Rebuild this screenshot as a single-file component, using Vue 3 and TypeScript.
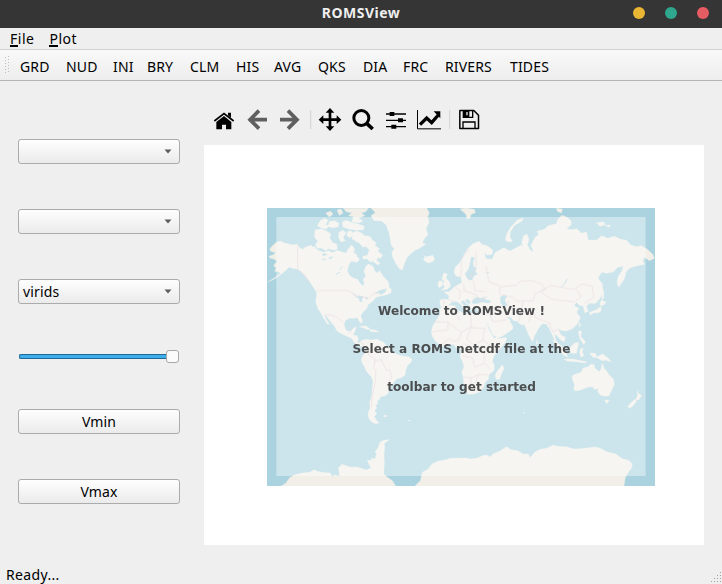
<script setup lang="ts">
interface Action { label: string; width: number }

const actions: Action[] = [
  { label: 'GRD', width: 46 },
  { label: 'NUD', width: 47 },
  { label: 'INI', width: 34 },
  { label: 'BRY', width: 43 },
  { label: 'CLM', width: 46 },
  { label: 'HIS', width: 38 },
  { label: 'AVG', width: 44 },
  { label: 'QKS', width: 45 },
  { label: 'DIA', width: 40 },
  { label: 'FRC', width: 42 },
  { label: 'RIVERS', width: 65 },
  { label: 'TIDES', width: 56 },
]
const selects: string[] = ['', '', 'virids']
const buttons: string[] = ['Vmin', 'Vmax']
</script>

<template>
  <div class="window">
    <header class="titlebar">
      <span class="title">ROMSView</span>
      <div class="controls"><i class="dot min" /><i class="dot max" /><i class="dot close" /></div>
    </header>
    <nav class="menubar">
      <span class="menu"><span class="key">F</span>ile</span>
      <span class="menu"><span class="key">P</span>lot</span>
    </nav>
    <div class="toolbar">
      <svg class="grip" width="5" height="18" viewBox="0 0 5 18">
        <path d="M.5 1v17M3.5 0v18" stroke="#bdbdbd" stroke-dasharray="1 2" fill="none" />
      </svg>
      <span v-for="a in actions" :key="a.label" class="action" :style="{ width: a.width + 'px' }">{{ a.label }}</span>
    </div>
    <main class="body">
      <aside class="side">
        <div v-for="(s, i) in selects" :key="i" class="field select">
          <span>{{ s }}</span>
          <svg width="8" height="5" viewBox="0 0 8 5"><path d="M.5 .5h7L4 4.500z" fill="#5c5c5c" /></svg>
        </div>
        <div class="slider"><div class="track" /><div class="thumb" /></div>
        <div v-for="b in buttons" :key="b" class="field button">{{ b }}</div>
      </aside>
      <section class="plot">
        <svg class="icons" width="290" height="50" viewBox="0 0 870 150">
          <g fill="none" stroke="#000">
            <path d="M43 69L72 47l29 22" stroke-width="5" />
            <path d="M49 72L72 54l22 18v22H78V80H66v14H49z" fill="#000" stroke="none" />
            <path d="M84 44h9v16l-9-8z" fill="#000" stroke="none" />
            <g stroke="#5f5f5f" stroke-width="11">
              <path d="M150 65h51M177 38l-27 27 27 27" />
              <path d="M240 65h51M264 38l27 27-27 27" />
            </g>
            <path d="M332 36v57M749 36v57" stroke="#d4d4d4" stroke-width="3" />
            <path d="M362 65h56M390 36v57" stroke-width="8" />
            <path d="M390 30l13 14h-26zM390 99l13-14h-26zM356 65l14-13v26zM424 65l-14-13v26z" fill="#000" stroke="none" />
            <circle cx="484" cy="60" r="22.5" stroke-width="9" />
            <path d="M500 76l18 17" stroke-width="11" />
            <path d="M558 48h60M558 67h60M558 86h60" stroke-width="4" />
            <path d="M569 42h14v12h-14zM594 61h15v12h-15zM574 80h15v12h-15z" fill="#000" stroke="none" />
            <path d="M652.500 36v56.500H723" stroke-width="3" />
            <path d="M660 80l20-20 15 14 20-23" stroke-width="10" />
            <path d="M701 40h20v21z" fill="#000" stroke="none" />
            <path d="M779.500 37.500h42l14 14v40h-56z" stroke-width="4.500" stroke-linejoin="round" />
            <path d="M790 38v20h28V38M789 91V72h36v19" stroke-width="4" />
            <path d="M790 38h18v20h-18z" fill="#000" stroke="none" />
            <path d="M801 42v10" stroke="#eee" stroke-width="4" />
          </g>
        </svg>
        <div class="canvas">
          <svg class="map" width="388" height="278" viewBox="21 24 1164 834">
            <rect x="21" y="24" width="1164" height="834" fill="#aad3df" />
            <g fill="#f1efe8" stroke="#f1efe8" stroke-width="1" stroke-linejoin="round">
              <path d="M36 139L49 127 62 123 72 129 80 130 97 135 112 133 119 143 128 148 138 140 153 136 160 142 165 139 171 149 190 157 205 153 219 158 231 151 245 156 259 159 264 148 275 135 284 147 281 158 292 166 283 175 273 185 266 196 262 213 270 228 282 235 293 238 300 250 310 259 313 249 309 240 317 228 312 214 317 200 325 192 339 199 344 213 351 219 359 212 369 228 376 236 384 244 388 259 374 266 358 271 344 280 357 279 362 285 374 278 381 269 395 277 381 284 366 287 349 291 338 304 323 315 321 325 307 339 302 347 308 364 304 370 298 365 293 353 281 355 268 355 257 361 252 371 255 385 261 393 273 393 280 384 289 382 284 396 278 404 291 407 295 417 292 426 303 433 316 434 313 438 300 439 285 430 275 415 264 410 246 402 231 393 225 381 213 366 198 347 191 342 200 360 208 373 202 372 192 356 182 338 174 326 167 307 169 289 170 277 159 260 145 240 131 224 123 214 110 207 97 205 88 201 78 211 67 220 52 231 39 239 24 246 46 232 62 219 55 215 44 214 48 205 41 196 51 184 42 177 31 175 27 169 40 164 46 158 32 154 29 148z" />
              <path d="M333 24H500L508 39 503 50 507 67 498 87 504 103 493 116 487 128 497 133 480 144 465 151 447 166 440 174 433 191 427 210 418 206 407 190 399 173 395 157 403 147 394 136 391 119 388 101 379 75 364 63 342 62 333 47 346 38z" />
              <path d="M490 178L495 171 491 166 500 171 509 168 518 166 524 177 518 185 505 189 496 184z" />
              <path d="M165 90L184 87 198 92 213 102 209 114 218 128 230 133 232 146 223 151 205 146 198 152 184 144 173 145 166 134 174 123 164 113zM172 77L180 63 193 55 204 61 197 74 209 77 198 87 184 84zM207 65L224 62 237 70 235 80 216 84 205 78zM247 66L259 61 276 68 294 72 313 79 310 89 289 91 267 87 249 81zM197 39L212 34 219 43 208 51zM231 30L243 27 249 39 238 46zM250 25H325L317 35 304 39 314 47 296 54 309 64 295 69 276 65 280 50 266 47 275 38 259 35zM237 97L249 91 258 99 249 113 256 122 243 126 236 112zM262 95L273 92 280 105 269 113 260 106zM277 98L291 93 304 99 315 107 329 109 338 121 349 128 344 136 358 146 353 154 368 165 361 176 354 171 350 181 360 190 355 195 338 184 330 186 323 177 307 176 310 168 322 166 328 149 317 139 309 142 299 130 288 124 276 116zM273 167L286 166 299 177 291 187 277 184 269 177z" />
              <path d="M298 380L316 377 330 386 324 389 309 383zM329 389L345 390 356 395 344 396 331 394zM384 258L395 269 391 276 377 269z" />
              <g transform="translate(240 180)">
                <path d="M58 249L66 241 79 238 93 240 110 238 131 247 140 257 152 266 154 276 166 281 185 287 207 291 216 298 213 307 202 317 197 330 195 345 184 353 169 357 160 370 151 382 144 390 145 400 135 407 121 410 118 419 111 423 114 430 107 436 110 444 104 452 110 461 103 470 108 479 117 489 105 491 93 484 85 472 84 459 90 444 89 427 95 408 97 384 99 362 93 349 80 335 73 319 66 309 64 298 68 286 78 276 78 262 71 255z" />
                <path d="M301 144L314 143 332 136 347 138 349 149 365 157 379 163 383 157 398 160 410 165 427 164 436 170 439 183 448 196 454 214 464 226 472 236 500 233 497 246 487 258 472 275 462 288 457 302 463 316 462 331 447 344 445 358 435 367 431 382 420 395 401 402 384 403 380 389 371 369 370 352 365 337 372 321 368 305 360 290 364 272 358 263 347 262 342 254 323 253 307 258 297 253 286 243 277 229 274 216 278 198 289 181 300 163z" />
                <path d="M487 314L492 325 484 343 479 357 470 359 465 348 472 333zM302 139L299 121 307 117 326 119 327 107 312 96 328 95 344 80 358 72 366 69 363 52 374 48 379 62 393 67 408 60 418 48 415 33 437 20 460 0 520 0 540 130 460 150 440 149 429 154 411 151 408 140 400 142 405 151 397 155 389 139 376 126 367 120 372 131 388 142 379 149 371 145 361 131 348 124 335 126 328 133 322 145 309 146z" />
                <path d="M311 39L322 42 318 54 328 65 332 79 322 87 304 91 314 81 308 70 314 65 306 57zM297 63L307 63 307 77 298 83 293 74z" />
              </g>
              <g transform="translate(600 0)">
                <path d="M3 230L-12 228-18 216-14 202 0 187 12 164 24 145 39 131 58 124 65 133 83 138 99 151 96 163 82 166 72 158 78 176 96 178 105 158 117 151 132 143 150 153 167 144 184 135 190 143 185 128 190 108 201 102 207 119 202 134 211 151 221 157 213 136 220 122 226 110 236 105 231 94 253 88 265 77 289 71 294 57 306 46 321 52 334 64 333 75 319 86 335 89 350 86 364 99 380 97 385 121 410 120 425 107 444 115 464 109 482 118 500 121 511 134 529 140 544 137 562 148 578 163 583 175 569 182 553 172 548 184 554 193 531 197 510 204 498 215 494 235 485 249 476 262 471 250 474 230 486 212 490 198 473 202 460 216 439 220 425 216 414 234 427 252 428 275 421 293 407 310 388 310 379 319 385 334 374 338 370 319 357 315 349 307 342 317 357 325 350 336 361 353 352 372 336 387 318 393 303 391 295 385 302 404 316 412 313 425 302 420 293 409 284 401 286 417 297 439 288 431 276 402 268 386 259 372 246 371 232 391 223 408 218 425 207 407 199 388 194 375 181 373 169 362 148 363 157 375 159 386 143 398 126 409 110 415 98 398 89 384 78 362 67 347 45 341 70 331 65 319 40 320 33 300z" />
                <path d="M136 121L141 100 154 79 173 60 189 54 186 63 164 76 151 95 150 113 158 124 146 126zM0 27L17 24 43 28 46 38 33 43 31 53 22 58 17 42zM289 25L307 27 304 39 292 34zM410 68L432 66 435 74 420 79zM435 76L452 75 447 82z" />
                <path d="M424 260L431 273 431 295 426 299zM424 300L439 307 428 317 419 314zM422 318L424 331 416 338 399 339 390 346 389 337 406 331 417 324zM355 393L364 393 363 410 376 425 372 434 360 417zM358 366L362 375 357 381zM230 421L235 430 230 434z" />
              </g>
              <g transform="translate(600 435)">
                <path d="M278 -14L294 5 310 29 323 36 317 22 304 3 286 -12zM312 42L337 42 363 47 380 50 375 54 348 50 321 48zM328 10L343-5 356-8 353 8 349 25 334 25zM361 12L370 9 366 21 372 31 363 36 359 24zM389 24L406 25 411 36 427 27 443 38 454 50 437 46 427 47 411 38 398 36z" />
                <path d="M336 93L345 88 363 82 370 69 385 65 393 57 404 60 403 68 418 80 423 73 427 55 432 70 440 78 448 91 460 102 463 119 455 136 447 152 434 154 421 150 413 139 414 128 405 134 397 125 382 127 365 134 347 138 341 133 344 119 339 107zM434 165L448 166 440 176zM532 137L537 147 545 151 536 165 527 164 533 151zM524 163L530 168 519 182 509 190 503 184z" />
              </g>
              <path d="M64 858L78 849 89 833 104 824 127 819 149 817 162 809 171 814 195 818 211 819 217 830 223 825 239 829 235 803 246 793 258 797 272 801 289 801 301 804 318 810 333 804 327 792 322 781 335 781 334 774 345 777 350 761 345 755 354 744 360 727 373 720 388 719 373 730 374 743 372 765 373 790 371 821 381 831 397 842 407 858zM465 858L481 842 487 817 504 808 516 792 535 783 551 781 571 775 600 774 620 774 634 777 652 774 671 766 682 766 690 771 700 761 718 754 740 740 753 749 773 752 789 762 805 762 810 773 824 757 840 748 861 745 878 736 893 739 920 740 941 747 961 746 980 744 1004 741 1019 744 1040 755 1067 762 1087 776 1105 781 1117 791 1114 805 1104 818 1096 832 1092 858z" />
              <path d="M371 648h9M446 662h5M790 638h4" stroke-width="4" />
            </g>
            <g fill="#aad3df">
              <path d="M602 306L614 318 620 313 611 303 615 301 628 314 631 304 623 297zM634 309L640 299 650 291 665 295 676 289 671 297 688 301 695 305 684 310 666 307 647 312zM720 292L732 284 741 291 734 300 742 315 731 320 722 310zM621 235L615 221 626 206 630 188 634 170 645 173 639 187 641 200 650 203 646 215 653 222 641 229 637 240 629 241zM677 363L683 375 698 405 709 411 703 415 688 391zM738 350L751 359 760 378 769 377 754 353zM285 291L300 288 312 291 306 295 307 304 300 307 296 295zM314 292L324 293 321 300z" />
              <path d="M204 174l17-7-9 11zM187 160l18 3-17 6z" />
            </g>
            <g fill="none" stroke="#aad3df" stroke-width="3">
              <path d="M238 209l8-9M227 223l12-6M904 261q13-9 17-24M679 219l8-2M288 290l-9-9M186 180l12-4" />
            </g>
            <g fill="none" stroke="#d8c0cc" stroke-width="2.500" stroke-linejoin="round" opacity=".7">
              <path d="M113 133v76l18 12 19 28M171 271h91l27 15 36 8 20-16 12 5M195 343l14 2 20 5 21 18M264 402l12-11" />
              <path d="M306 426l12 26-11 17M329 424l6 17-9 24 20 13-5 24 7 10-2 32-9 45-4 32M342 485l22-6 14 30 12 1 6 24-14 12" />
              <g transform="translate(240 180)">
                <path d="M286 186h38v24l-29 2-19 4M324 187l40 30 31-17M345 138l5 25 12 20M391 160l3 43 44 2M364 217l-8 24-17 3-13-8-22 18M393 202l-13 35 23 18 30-18M433 204l-4 36 36 29 20-2M370 253l31 7M367 287l31 7 6 28 30-12 16 17M433 262l-1 45M370 351l24 3 22-11 30 2M393 354l-1 29M414 345l-7 24 28 18M303 119l10 3-4 20M326 119l20 6M345 80l17 14-5 25M370 69l3 23 31 10-6 21M400 61l4 31 36 3M408 101l11 23 23-14M438 19l9 47 31 11M387 61l21-44 1-41M362 49l4-54 22-30" />
              </g>
              <path d="M718 280l3-20 47-4 12-12 32-3 33 10 11 17-31 14-5 20-49 1-14-12-38-8M842 272l32-15 70 11 20-16 32 6 6 34-28 18M843 276l32 22 68 7 20-15-13-20M747 302l-9 23-22-6-27 5M788 306l-3 24 30 13-10 23M815 324l13 29 47 19M680 320l18 45 41-6M865 368l14 27 14-6 9 8M747 318l38 13-9 35" />
            </g>
            <rect x="49" y="51" width="1108" height="777" fill="#fff" opacity=".4" />
          </svg>
          <div class="welcome">
            <p>Welcome to ROMSView !</p>
            <p>Select a ROMS netcdf file at the</p>
            <p>toolbar to get started</p>
          </div>
        </div>
      </section>
    </main>
    <footer class="status">
      <span>Ready...</span>
      <svg width="11" height="11" viewBox="0 0 11 11">
        <path d="M9 0h1v1H9zM6 3h1v1H6zM9 3h1v1H9zM3 6h1v1H3zM6 6h1v1H6zM9 6h1v1H9zM0 9h1v1H0zM3 9h1v1H3zM6 9h1v1H6zM9 9h1v1H9z" fill="#a0a0a0" />
      </svg>
    </footer>
  </div>
</template>

<style>
body { margin: 0; background: #efefef; }
</style>

<style scoped>
.window {
  width: 722px; height: 584px; background: #efefef; color: #000; overflow: hidden;
  display: flex; flex-direction: column; box-sizing: border-box;
  font: 14px/20px "Noto Sans", "Open Sans", sans-serif; letter-spacing: .15px;
}
.titlebar {
  height: 28px; flex: none; background: #353535; color: #eee;
  display: grid; grid-template-columns: 1fr auto 1fr; align-items: center;
}
.title { grid-column: 2; font-weight: 700; font-size: 14px; letter-spacing: .5px; line-height: 26px; height: 28px; }
.controls { display: flex; justify-content: flex-end; gap: 20px; padding: 0 13px 2px 0; }
.dot { width: 12px; height: 12px; border-radius: 50%; }
.min { background: #e9b733; }
.max { background: #2fa68e; }
.close { background: #e55c62; }
.menubar { height: 21px; flex: none; display: flex; gap: 15px; padding-left: 10px; line-height: 21px; letter-spacing: .5px; border-bottom: 1px solid #d2d2d2; }
.key { border-bottom: 2px solid #000; display: inline-block; height: 17px; line-height: 21px; vertical-align: top; }
.toolbar {
  height: 31px; flex: none; display: flex; align-items: center; box-sizing: border-box;
  background: linear-gradient(#f9f9f9, #ededed); border-bottom: 1px solid #b4b4b4; line-height: 30px;
}
.grip { margin: 0 10px 0 5px; flex: none; }
.action { flex: none; white-space: nowrap; padding-top: 3px; }
.body { flex: none; height: 484px; display: flex; }
.side { width: 162px; padding: 58px 24px 0 18px; flex: none; display: flex; flex-direction: column; gap: 45px; box-sizing: content-box; }
.field {
  height: 25px; flex: none; box-sizing: border-box; border: 1px solid #ababab; border-radius: 3px;
  background: linear-gradient(#fefefe, #ebebeb); display: flex; align-items: center;
}
.select { justify-content: space-between; padding: 0 7px 0 4px; }
.button { justify-content: center; }
.slider { height: 15px; display: flex; align-items: center; }
.track { flex: 1; margin-left: 1px; height: 5px; box-sizing: border-box; border: 1px solid #1f6a99; border-right: 0; border-radius: 2px 0 0 2px; background: #3daee9; }
.thumb { width: 13px; height: 13px; box-sizing: border-box; border: 1px solid #a8a8a8; border-radius: 3px; background: #fbfbfb; margin-right: 1px; }
.plot { width: 500px; display: flex; flex-direction: column; }
.icons { margin: 17px 0 0 -4px; height: 50px; flex: none; }
.canvas { width: 500px; height: 400px; background: #fff; margin-top: -3px; padding: 63px 0 0 63px; box-sizing: border-box; display: grid; align-content: start; grid-template-columns: 388px; }
.map { grid-area: 1 / 1; display: block; }
.welcome {
  grid-area: 1 / 1; z-index: 1; padding: 84px 0 0 1px; text-align: center; color: #4b4d4e;
  font: bold 12.120px/38px "DejaVu Sans", sans-serif; letter-spacing: 0;
}
.welcome p { margin: 0; white-space: nowrap; }
.status { flex: 1; display: flex; justify-content: space-between; padding-left: 6px; line-height: 20px; letter-spacing: .35px; }
.status svg { margin: 7px 0 0; }
</style>
